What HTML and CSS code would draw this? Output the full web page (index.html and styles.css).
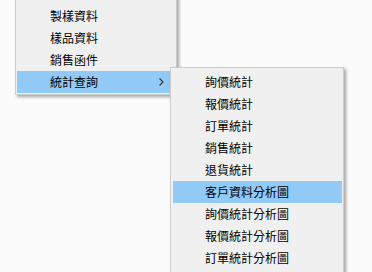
FILE: index.html
```html
<!DOCTYPE html>
<html lang="zh-Hant">
<head>
<meta charset="utf-8">
<link rel="stylesheet" href="styles.css">
</head>
<body>
<div class="desk">
  <ul class="menu menu-main">
    <li class="item">製樣資料</li>
    <li class="item">樣品資料</li>
    <li class="item">銷售函件</li>
    <li class="item active has-sub"><span>統計查詢</span>
      <svg class="chev" width="5" height="8" viewBox="0 0 5 8"><path d="M0.5 0.5 L4 4 L0.5 7.5" fill="none" stroke="#333" stroke-width="1.1"/></svg>
    </li>
  </ul>
  <ul class="menu menu-sub">
    <li class="item">詢價統計</li>
    <li class="item">報價統計</li>
    <li class="item">訂單統計</li>
    <li class="item">銷售統計</li>
    <li class="item">退貨統計</li>
    <li class="item active">客戶資料分析圖</li>
    <li class="item">詢價統計分析圖</li>
    <li class="item">報價統計分析圖</li>
    <li class="item">訂單統計分析圖</li>
  </ul>
</div>
</body>
</html>
```

FILE: styles.css
```css
html, body {
  margin: 0;
  padding: 0;
  width: 372px;
  height: 272px;
  overflow: hidden;
  background: #fbfbfb;
}
.desk {
  position: relative;
  width: 372px;
  height: 272px;
  font-family: "Noto Sans CJK TC", "Noto Sans", sans-serif;
  font-size: 12px;
  color: #000;
}
.menu {
  list-style: none;
  margin: 0;
  background: #f0f0f0;
  border: 1px solid #cccccc;
  box-sizing: border-box;
  box-shadow: 2px 2px 3px rgba(0,0,0,0.35);
}
.menu-main {
  position: absolute;
  left: 15px;
  top: -8px;
  width: 162px;
  padding: 12px 1px 1px 1px;
}
.menu-sub {
  position: absolute;
  left: 170px;
  top: 67px;
  width: 174px;
  padding: 3px 1px 3px 2px;
}
.item {
  height: 22px;
  line-height: 22px;
  padding-left: 32px;
  white-space: nowrap;
}
.menu-sub .item {
  padding-left: 32px;
}
.menu-main .item {
  padding-left: 33px;
}
.item.active {
  background: #91c9f7;
}
.has-sub {
  display: flex;
  align-items: center;
  justify-content: space-between;
  padding-right: 11px;
}
.chev {
  display: block;
}
```
